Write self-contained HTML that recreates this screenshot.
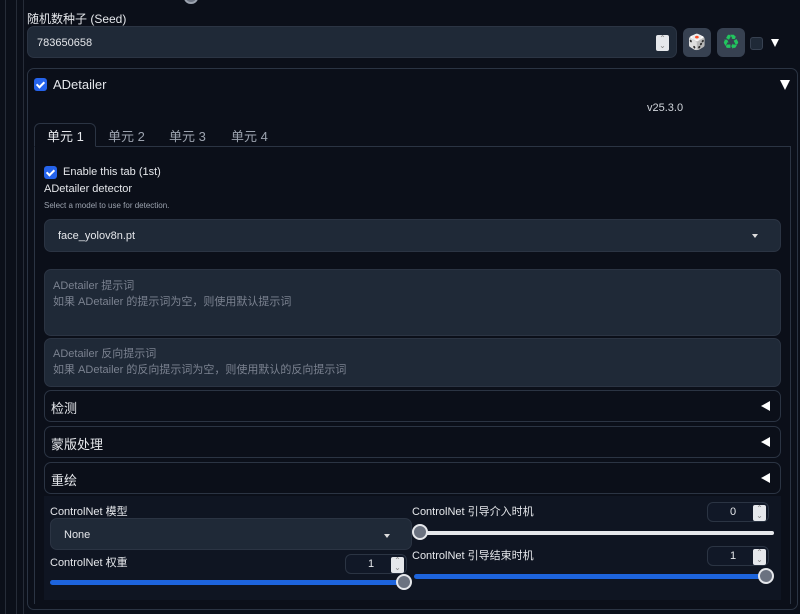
<!DOCTYPE html>
<html><head><meta charset="utf-8"><style>
*{box-sizing:border-box;margin:0;padding:0}
body{width:800px;height:614px;background:#0b0f19;font-family:"Liberation Sans","Noto Sans CJK SC",sans-serif;color:#e5e7eb;position:relative;overflow:hidden;font-size:12px}
.a{position:absolute}
.vl{position:absolute;top:0;bottom:0;width:1px;background:#262c38}
.inp{background:#1f2937;border:1px solid #2b3443;border-radius:7px}
.acc{border:1px solid #2b3443;border-radius:7px;background:#0b0f19}
.tri{position:absolute;right:10px;top:50%;margin-top:-5px;width:0;height:0;border-top:5px solid transparent;border-bottom:5px solid transparent;border-right:9px solid #fff}
.chk{position:absolute;width:13px;height:13px;background:#2563eb;border-radius:3px}
.chk:after{content:"";position:absolute;left:4px;top:1.5px;width:3px;height:6px;border:solid #fff;border-width:0 2px 2px 0;transform:rotate(45deg)}
.spin{position:absolute;width:13px;height:16px;background:#e5e7eb;border-radius:2px;color:#888;font-size:8px;line-height:7px;text-align:center}
.num{position:absolute;background:#111827;border:1px solid #2b3443;border-radius:6px;height:20px;font-size:11px}
.knob{position:absolute;width:16px;height:16px;border-radius:50%;background:#6b7280;border:2px solid #e5e7eb}
.ph{color:#7b8290}
</style></head><body>
<div class="vl" style="left:5px"></div><div class="vl" style="left:16px"></div><div class="vl" style="left:23px"></div>
<div class="a" style="left:184px;top:-8px;width:14px;height:12px;border-radius:50%;border:2px solid #9ca3af;background:#6b7280"></div>
<div class="a" style="left:27px;top:10px;font-size:12px">随机数种子 (Seed)</div>
<div class="a inp" style="left:27px;top:26px;width:650px;height:32px"><span class="a" style="left:9px;top:10px;font-size:11px">783650658</span><div class="spin" style="left:628px;top:8px;background:#e5e7eb">⌃<br>⌄</div></div>
<div class="a" style="left:683px;top:28px;width:28px;height:29px;background:#374151;border-radius:6px;text-align:center;line-height:29px;font-size:15px">🎲</div>
<div class="a" style="left:717px;top:28px;width:28px;height:29px;background:#374151;border-radius:6px;text-align:center;line-height:29px;font-size:15px;color:#22c55e">♻</div>
<div class="a" style="left:750px;top:37px;width:13px;height:13px;background:#1f2937;border:1px solid #374151;border-radius:3px"></div>
<div class="a" style="left:771px;top:39px;width:0;height:0;border-left:4px solid transparent;border-right:4px solid transparent;border-top:8px solid #fff"></div>

<div class="a" style="left:27px;top:68px;width:771px;height:542px;border:1px solid #2b3443;border-radius:7px"></div>
<div class="chk" style="left:34px;top:78px"></div>
<div class="a" style="left:53px;top:77px;font-size:13px">ADetailer</div>
<div class="a" style="left:780px;top:80px;width:0;height:0;border-left:5px solid transparent;border-right:5px solid transparent;border-top:10px solid #fff"></div>
<div class="a" style="left:647px;top:102px;font-size:11px;color:#d1d5db">v25.3.0</div>

<div class="a" style="left:34px;top:146px;width:757px;height:458px;border:1px solid #2b3443;border-top:none;border-bottom:none"></div>
<div class="a" style="left:34px;top:146px;width:757px;height:1px;background:#2b3443"></div>
<div class="a" style="left:34px;top:123px;width:62px;height:24px;border:1px solid #2b3443;border-bottom:1px solid #0b0f19;border-radius:6px 6px 0 0;background:#0b0f19"></div>
<div class="a" style="left:47px;top:126px;font-size:13px">单元 1</div>
<div class="a" style="left:108px;top:126px;font-size:13px;color:#9ca3af">单元 2</div>
<div class="a" style="left:169px;top:126px;font-size:13px;color:#9ca3af">单元 3</div>
<div class="a" style="left:231px;top:126px;font-size:13px;color:#9ca3af">单元 4</div>

<div class="chk" style="left:44px;top:166px"></div>
<div class="a" style="left:63px;top:166px;font-size:11px">Enable this tab (1st)</div>
<div class="a" style="left:44px;top:183px;font-size:11px">ADetailer detector</div>
<div class="a" style="left:44px;top:201px;font-size:8px;color:#9ca3af">Select a model to use for detection.</div>
<div class="a inp" style="left:44px;top:219px;width:737px;height:33px"><span class="a" style="left:13px;top:10px;font-size:11px">face_yolov8n.pt</span><div class="a" style="left:707px;top:14px;border-left:3.5px solid transparent;border-right:3.5px solid transparent;border-top:4px solid #ddd"></div></div>
<div class="a inp" style="left:44px;top:269px;width:737px;height:67px;font-size:11px;line-height:16px;padding:8px 8px"><div class="ph">ADetailer 提示词<br>如果 ADetailer 的提示词为空，则使用默认提示词</div></div>
<div class="a inp" style="left:44px;top:338px;width:737px;height:49px;font-size:11px;line-height:16px;padding:7px 8px"><div class="ph">ADetailer 反向提示词<br>如果 ADetailer 的反向提示词为空，则使用默认的反向提示词</div></div>
<div class="a acc" style="left:44px;top:390px;width:737px;height:32px"><span class="a" style="left:6px;top:7px;font-size:13px">检测</span><div class="tri"></div></div>
<div class="a acc" style="left:44px;top:426px;width:737px;height:32px"><span class="a" style="left:6px;top:7px;font-size:13px">蒙版处理</span><div class="tri"></div></div>
<div class="a acc" style="left:44px;top:462px;width:737px;height:32px"><span class="a" style="left:6px;top:7px;font-size:13px">重绘</span><div class="tri"></div></div>

<div class="a" style="left:44px;top:496px;width:737px;height:104px;background:#0f1522"></div>
<div class="a" style="left:50px;top:503px;font-size:11px">ControlNet 模型</div>
<div class="a inp" style="left:50px;top:518px;width:362px;height:32px"><span class="a" style="left:13px;top:10px;font-size:11px">None</span><div class="a" style="left:333px;top:15px;border-left:3px solid transparent;border-right:3px solid transparent;border-top:4px solid #ddd"></div></div>
<div class="a" style="left:50px;top:554px;font-size:11px">ControlNet 权重</div>
<div class="num" style="left:345px;top:554px;width:62px"><span class="a" style="left:22px;top:3px">1</span><div class="spin" style="left:45px;top:2px">⌃<br>⌄</div></div>
<div class="a" style="left:50px;top:580px;width:355px;height:5px;background:#1d64dd;border-radius:3px"></div>
<div class="knob" style="left:396px;top:574px"></div>

<div class="a" style="left:412px;top:503px;font-size:11px">ControlNet 引导介入时机</div>
<div class="num" style="left:707px;top:502px;width:62px"><span class="a" style="left:22px;top:3px">0</span><div class="spin" style="left:45px;top:2px">⌃<br>⌄</div></div>
<div class="a" style="left:414px;top:531px;width:360px;height:4px;background:#e5e7eb;border-radius:2px"></div>
<div class="knob" style="left:412px;top:524px"></div>
<div class="a" style="left:412px;top:547px;font-size:11px">ControlNet 引导结束时机</div>
<div class="num" style="left:707px;top:546px;width:62px"><span class="a" style="left:22px;top:3px">1</span><div class="spin" style="left:45px;top:2px">⌃<br>⌄</div></div>
<div class="a" style="left:414px;top:574px;width:358px;height:5px;background:#1d64dd;border-radius:3px"></div>
<div class="knob" style="left:758px;top:568px"></div>
</body></html>
